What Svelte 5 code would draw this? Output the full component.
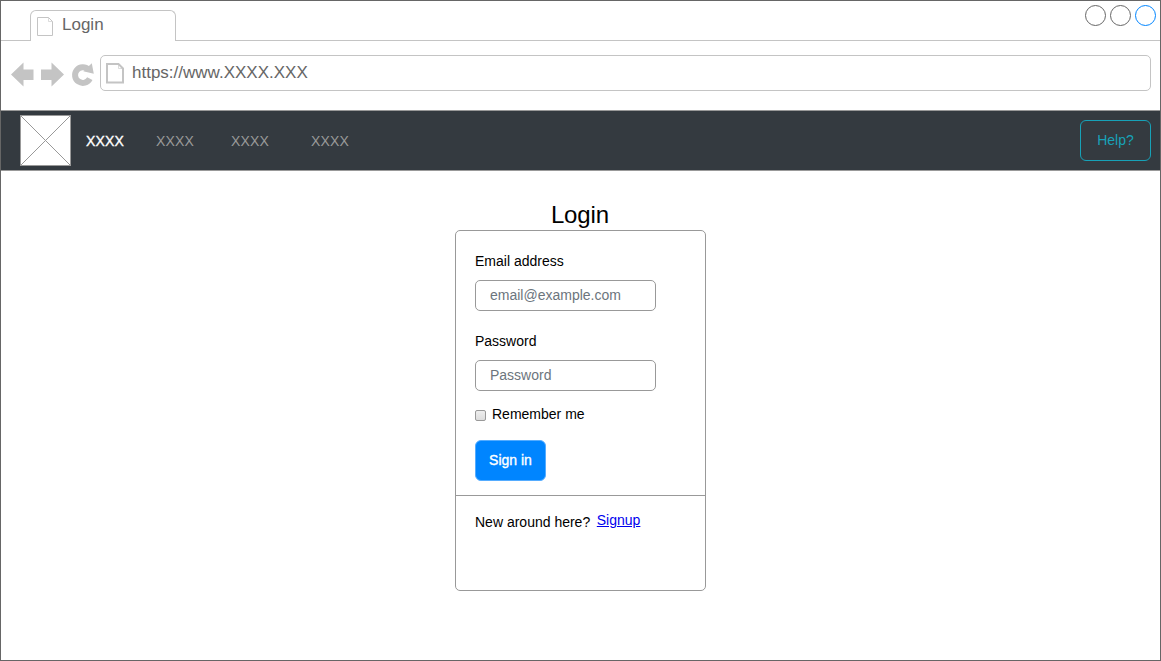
<script>
  const links = ['XXXX', 'XXXX', 'XXXX', 'XXXX'];
  let email = $state('');
  let password = $state('');
  let remember = $state(false);
</script>

<div class="window">
  <header class="tabs">
    <div class="tab">
      <svg class="page" width="17" height="20" viewBox="0 0 17 20">
        <path d="M.5 .5H11.5L15.5 4.5V18.5H.5Z" /><path class="fold" d="M11.5 .5V4.5H15.5" />
      </svg>
      <span>Login</span>
    </div>
    <div class="strip"></div>
    <div class="controls"><i></i><i></i><i class="active"></i></div>
  </header>

  <div class="toolbar">
    <svg class="tools" width="84" height="26" viewBox="0 0 84 26">
      <path class="solid" d="M0 13.5 12.5 1.5V8.5H22.5V19H12.5V25.5Z" />
      <path class="solid" d="M53 13.5 40.5 1.5V8.5H30V19H40.5V25.5Z" />
      <path class="turn" d="M78.8 17.6A7.8 7.8 0 1 1 77.4 8.6" />
      <path class="solid" d="M80.8 2.3 82.8 12.8 72.3 10.3Z" />
    </svg>
    <div class="address">
      <svg class="page bold" width="19" height="21" viewBox="0 0 19 21">
        <path d="M1 1H12.5L17 5.5V19.5H1Z" /><path class="fold" d="M12.5 1V5.5H17" />
      </svg>
      <span>https://www.XXXX.XXX</span>
    </div>
  </div>

  <nav>
    <svg class="logo" width="51" height="51" viewBox="0 0 51 51">
      <rect x=".5" y=".5" width="50" height="50" />
      <path d="M.5 .5 50.5 50.5M50.5 .5 .5 50.5" />
    </svg>
    <div class="links">
      {#each links as link, i}
        <span class:current={i === 0}>{link}</span>
      {/each}
    </div>
    <button class="help">Help?</button>
  </nav>

  <main>
    <h1>Login</h1>
    <section class="card">
      <form onsubmit={(e) => e.preventDefault()}>
        <label for="email">Email address</label>
        <input class="field" id="email" type="text" placeholder="email@example.com" bind:value={email} />
        <label for="password">Password</label>
        <input class="field" id="password" type="password" placeholder="Password" bind:value={password} />
        <label class="remember"><input type="checkbox" bind:checked={remember} /><span>Remember me</span></label>
        <button class="submit">Sign in</button>
      </form>
      <footer><span>New around here?</span><a href="#signup">Signup</a></footer>
    </section>
  </main>
</div>

<style>
  :global(body) { background: #fff; }
  .window, .window * { box-sizing: border-box; }
  .window {
    width: 1161px; height: 661px; border: 1px solid #666; background: #fff;
    font: 14px/16px "Liberation Sans", Arial, sans-serif; color: #000;
    display: flex; flex-direction: column; overflow: hidden;
  }
  button, input { font: inherit; margin: 0; }
  .tabs { height: 40px; display: flex; align-items: flex-end; flex: none; }
  .tabs::before { content: ""; width: 29px; height: 1px; background: #c4c4c4; }
  .tab {
    width: 146px; height: 31px; border: 1px solid #c4c4c4; border-bottom: 0;
    border-radius: 6px 6px 0 0; display: flex; padding: 4px 0 0 6px;
    font-size: 17px; line-height: 20px; color: #666;
  }
  .tab span { margin-left: 8px; }
  .page { fill: none; stroke: #c4c4c4; stroke-width: 1; }
  .tab .page { margin-top: 2px; }
  .strip { flex: 1; height: 1px; background: #c4c4c4; }
  .controls {
    display: flex; gap: 4px; height: 36px; width: 75px;
    border-bottom: 1px solid #c4c4c4;
  }
  .controls i { width: 21px; height: 21px; flex: none; border: 1px solid #666; border-radius: 50%; }
  .controls .active { border-color: #0085ff; }

  .toolbar { height: 69px; flex: none; display: flex; padding: 14px 9px 0 10px; }
  .tools { margin-top: 6px; margin-right: 5px; flex: none; }
  .solid { fill: #c4c4c4; }
  .turn { fill: none; stroke: #c4c4c4; stroke-width: 6; }
  .address {
    flex: 1; height: 36px; border: 1px solid #c4c4c4; border-radius: 5px; display: flex;
    padding: 7px 0 0 5px; font-size: 17px; line-height: 20px; color: #666;
  }
  .address span { margin-left: 7px; }
  .bold { stroke-width: 2; }
  .fold { stroke-width: 1; opacity: .6; }

  nav {
    height: 61px; flex: none; display: flex; align-items: center; background: #343a40;
    border: solid #999; border-width: 1px 0; padding: 0 9px 0 19px;
  }
  .logo { fill: #fff; stroke: #999; flex: none; }
  .links {
    display: grid; grid-template-columns: 70px 75px 80px auto; margin-left: 15px;
    flex: 1; color: #999; letter-spacing: .2px;
  }
  .current { color: #fff; -webkit-text-stroke: .35px #fff; }
  .help {
    width: 71px; height: 41px; border: 1px solid #17a2b8; border-radius: 6px;
    background: transparent; color: #17a2b8; padding: 0 0 2px;
  }

  main { display: flex; flex-direction: column; align-items: center; padding-top: 29px; }
  h1 { margin: 0 1px 1px 0; font-size: 24px; line-height: 29px; font-weight: 400; letter-spacing: -.1px; }
  .card { width: 251px; height: 361px; border: 1px solid #999; border-radius: 5px; }
  form {
    height: 265px; border-bottom: 1px solid #999; padding: 22px 0 0 19px;
    display: flex; flex-direction: column; align-items: flex-start;
  }
  .field {
    width: 181px; height: 31px; margin: 11px 0 22px; border: 1px solid #999; border-radius: 5px;
    padding: 0 14px 2px; background: #fff; outline: 0;
  }
  .field::placeholder { color: #6c757d; opacity: 1; }
  #password { margin-bottom: 15px; }
  .remember { display: flex; align-items: flex-start; gap: 6px; }
  .remember input {
    appearance: none; width: 11px; height: 11px; margin-top: 4px; border: 1px solid #999;
    border-radius: 2px; background: linear-gradient(#eee, #ddd);
  }
  .submit {
    width: 71px; height: 41px; margin-top: 18px; border: 1px solid #55acff; border-radius: 6px;
    background: #0085ff; color: #fff; padding: 0 0 2px; -webkit-text-stroke: .35px #fff;
  }
  footer { display: flex; padding: 18px 0 0 19px; }
  footer a { margin: -2px 0 0 6.6px; color: #00e; }
</style>
